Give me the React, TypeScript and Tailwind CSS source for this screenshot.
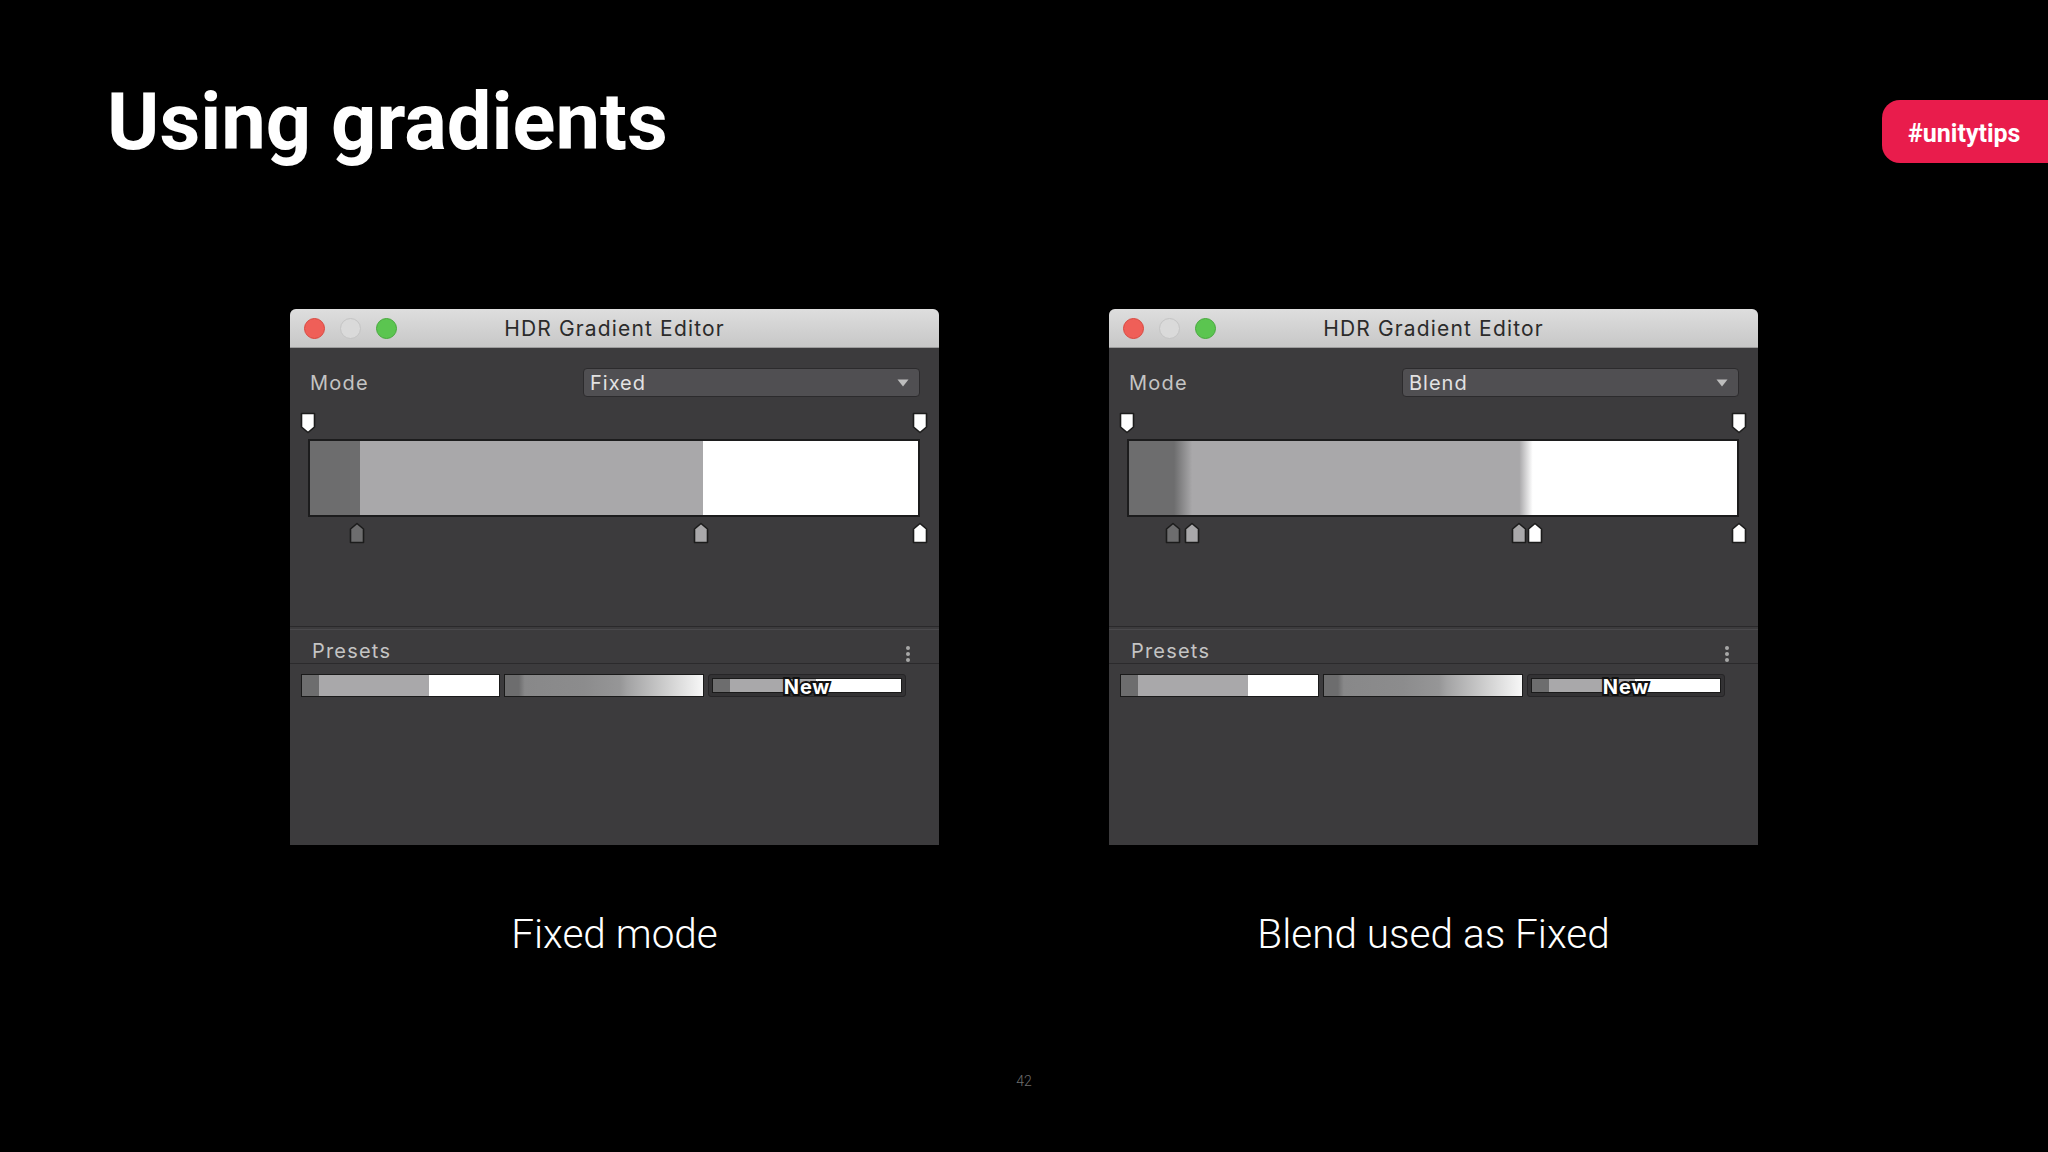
import React from "react";

type Marker = { p: number; color: string };

const TopMarker = () => (
  <svg width="16" height="22" viewBox="0 0 16 22" className="block">
    <path d="M1.5 1.5H14.5V15L8 20.5L1.5 15Z" fill="#ffffff" stroke="#1c1c1c" strokeWidth="1.6" strokeLinejoin="round" />
  </svg>
);

const BottomMarker = ({ color }: { color: string }) => (
  <svg width="16" height="22" viewBox="0 0 16 22" className="block">
    <path d="M1.5 20.5V7L8 1.5L14.5 7V20.5Z" fill={color} stroke="#1c1c1c" strokeWidth="1.6" strokeLinejoin="round" />
  </svg>
);

const DARK = "#6d6d6e";
const GRAY = "#a9a8aa";

function EditorWindow({
  mode,
  gradient,
  bottom,
}: {
  mode: string;
  gradient: string;
  bottom: Marker[];
}) {
  return (
    <div className="w-[649px] h-[536px] flex flex-col bg-[#3c3b3d] rounded-t-[6px] overflow-hidden font-['Inter',sans-serif]">
      {/* title bar */}
      <div className="h-[39px] shrink-0 grid grid-cols-[1fr_auto_1fr] items-center bg-gradient-to-b from-[#dedede] to-[#c7c7c7] border-b border-[#9c9c9c]">
        <div className="flex items-center gap-[15px] pl-[14px]">
          <span className="w-[21px] h-[21px] rounded-full bg-[#ef5f58] border border-[#d9483f]" />
          <span className="w-[21px] h-[21px] rounded-full bg-[#dadada] border border-[#c4c4c4]" />
          <span className="w-[21px] h-[21px] rounded-full bg-[#5bc550] border border-[#46a93c]" />
        </div>
        <div className="text-[21px] leading-none tracking-[0.055em] text-[#2b2b2b]">HDR Gradient Editor</div>
        <div />
      </div>

      {/* top section */}
      <div className="flex flex-col pl-[18px] pr-[19px]">
        <div className="flex items-center justify-between mt-[20px]">
          <span className="pl-[2px] text-[20px] leading-none tracking-[0.06em] text-[#c4c4c4]">Mode</span>
          <div className="w-[337px] h-[29px] rounded-[4px] bg-[#504f52] border border-[#2c2b2d] flex items-center justify-between pl-[6px] pr-[10px]">
            <span className="text-[20px] leading-none tracking-[0.05em] text-[#e2e2e2]">{mode}</span>
            <svg width="12" height="8" viewBox="0 0 12 8">
              <path d="M0.5 0.5H11.5L6 7.5Z" fill="#bdbdbd" />
            </svg>
          </div>
        </div>

        <div className="relative h-[22px] mt-[15px]">
          <div className="absolute top-0 left-0 -translate-x-1/2">
            <TopMarker />
          </div>
          <div className="absolute top-0 left-full -translate-x-1/2">
            <TopMarker />
          </div>
        </div>

        <div className="mt-[5px] h-[78px] border-2 border-[#1c1c1d]" style={{ background: gradient }} />

        <div className="relative h-[22px] mt-[5px]">
          {bottom.map((m, i) => (
            <div key={i} className="absolute top-0 -translate-x-1/2" style={{ left: `${m.p}%` }}>
              <BottomMarker color={m.color} />
            </div>
          ))}
        </div>
      </div>

      {/* separator */}
      <div className="mt-[82px] h-[1px] bg-[#2a292b]" />
      <div className="mt-[2px] h-[1px] bg-[#4a494c]" />

      {/* presets header */}
      <div className="h-[34px] flex items-end justify-between pl-[22px] pr-[29px] border-b border-[#2b2a2c]">
        <span className="pb-[2px] text-[20px] leading-none tracking-[0.06em] text-[#c4c4c4]">Presets</span>
        <div className="flex flex-col gap-[2px] pb-[1px]">
          <span className="w-[4px] h-[4px] rounded-full bg-[#a8a8a8]" />
          <span className="w-[4px] h-[4px] rounded-full bg-[#a8a8a8]" />
          <span className="w-[4px] h-[4px] rounded-full bg-[#a8a8a8]" />
        </div>
      </div>

      {/* presets */}
      <div className="flex items-center gap-[4px] pl-[11px] mt-[10px]">
        <div
          className="w-[199px] h-[23px] border border-[#1a1a1a]"
          style={{
            background: `linear-gradient(to right, ${DARK} 0%, ${DARK} 8.5%, ${GRAY} 8.5%, ${GRAY} 64.5%, #ffffff 64.5%, #ffffff 100%)`,
          }}
        />
        <div
          className="w-[200px] h-[23px] border border-[#1a1a1a]"
          style={{
            background: `linear-gradient(to right, ${DARK} 0%, ${DARK} 7%, #888889 10%, #8c8c8d 40%, #969697 58%, #a3a3a4 62%, #d6d6d6 85%, #f7f7f7 100%)`,
          }}
        />
        <div className="w-[198px] h-[23px] rounded-[3px] bg-[#333234] border border-[#262527] p-[3px] flex">
          <div
            className="flex-1 border border-[#1a1a1a] flex items-center justify-center"
            style={{
              background: `linear-gradient(to right, ${DARK} 0%, ${DARK} 9%, ${GRAY} 9%, ${GRAY} 55%, #ffffff 55%, #ffffff 100%)`,
            }}
          >
            <span className="pt-[2px] text-[20px] leading-none font-bold tracking-[0.04em] text-white [-webkit-text-stroke:4px_#111111] [paint-order:stroke_fill]">
              New
            </span>
          </div>
        </div>
      </div>
    </div>
  );
}

export default function App() {
  const leftGradient = `linear-gradient(to right, ${DARK} 0%, ${DARK} 8.2%, ${GRAY} 8.2%, ${GRAY} 64.6%, #ffffff 64.6%, #ffffff 100%)`;
  const rightGradient = `linear-gradient(to right, ${DARK} 0%, ${DARK} 7.4%, ${GRAY} 10.4%, ${GRAY} 64.2%, #ffffff 66.4%, #ffffff 100%)`;

  return (
    <div className="w-[2048px] h-[1152px] bg-black flex flex-col font-['Roboto',sans-serif] overflow-hidden">
      <div className="flex items-start justify-between pt-[82px] pl-[107px]">
        <h1 className="text-[79.5px] leading-none font-bold text-white">Using gradients</h1>
        <div className="mt-[18px] h-[63px] w-[166px] pl-[26px] pt-[5px] bg-[#e91c4c] rounded-l-[18px] flex items-center text-[25px] font-bold text-white">
          #unitytips
        </div>
      </div>

      <div className="mt-[146px] flex justify-center gap-[170px]">
        <EditorWindow
          mode="Fixed"
          gradient={leftGradient}
          bottom={[
            { p: 8, color: DARK },
            { p: 64.2, color: GRAY },
            { p: 100, color: "#ffffff" },
          ]}
        />
        <EditorWindow
          mode="Blend"
          gradient={rightGradient}
          bottom={[
            { p: 7.5, color: DARK },
            { p: 10.6, color: GRAY },
            { p: 64, color: GRAY },
            { p: 66.6, color: "#ffffff" },
            { p: 100, color: "#ffffff" },
          ]}
        />
      </div>

      <div className="mt-[69px] flex justify-center gap-[170px]">
        <div className="w-[649px] text-center text-[40.5px] leading-none font-light text-white">Fixed mode</div>
        <div className="w-[649px] text-center text-[40.5px] leading-none font-light text-white">Blend used as Fixed</div>
      </div>

      <div className="mt-[119px] text-center text-[14px] leading-none font-light text-[#6e6e6e]">42</div>
    </div>
  );
}
